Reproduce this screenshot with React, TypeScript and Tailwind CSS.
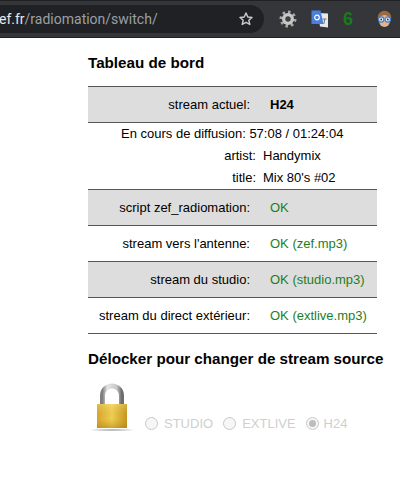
import React from "react";

function Row({ label, value, shaded, green, bold }: { label: string; value: string; shaded?: boolean; green?: boolean; bold?: boolean }) {
  return (
    <div className={`flex h-9 items-center border-b border-[#555] ${shaded ? "bg-[#dddddd]" : "bg-white"}`}>
      <div className="w-[162px] text-right">{label}</div>
      <div className={`ml-5 ${green ? "text-[#1e7e1e]" : ""} ${bold ? "font-bold" : ""}`}>{value}</div>
    </div>
  );
}

function Radio({ checked }: { checked?: boolean }) {
  return (
    <span className="flex h-[13px] w-[13px] items-center justify-center rounded-full border border-[#c8c8c8] bg-[#f6f6f6]">
      {checked && <span className="h-[7px] w-[7px] rounded-full bg-[#bdbdbd]" />}
    </span>
  );
}

export default function App() {
  return (
    <div className="h-[484px] w-[400px] overflow-hidden bg-white font-['Liberation_Sans',sans-serif] text-[13px] text-black">
      <div className="flex h-[38px] items-center border-y border-b-[#202124] border-t-[#202124] bg-[#35363a]">
        <div className="flex h-7 w-[264px] items-center justify-between rounded-r-full bg-[#202124] pr-[10px] font-['Roboto',sans-serif] text-[14px]">
          <span className="-ml-px text-[#e8eaed]">ef.fr<span className="text-[#9aa0a6]">/radiomation/switch/</span></span>
          <svg width="16" height="16" viewBox="0 0 24 24" fill="none" stroke="#c8cacd" strokeWidth="2.2" strokeLinejoin="round">
            <path d="M12 3l2.700 6 6.300.6-4.800 4.200 1.500 6.400L12 16.900 6.300 20.200l1.500-6.400L3 9.600 9.300 9z" />
          </svg>
        </div>
        <div className="ml-[15px] flex items-center">
          <svg width="18" height="18" viewBox="0 0 18 18">
            <circle cx="9" cy="9" r="6.800" fill="none" stroke="#a8a8a8" strokeWidth="3.400" strokeDasharray="2.400 2.900" />
            <circle cx="9" cy="9" r="6" fill="#c6c6c6" />
            <circle cx="9" cy="9" r="3.300" fill="#404040" stroke="#e4e4e4" strokeWidth="0.800" />
          </svg>
          <svg className="ml-[14px]" width="17" height="18" viewBox="0 0 17 18">
            <path d="M7 3 L17 3.500 V17.500 L9 16.500z" fill="#e8e8e8" />
            <path d="M0.500 0.500 H9.500 L12.500 14 H0.500z" fill="#4a7fe0" />
            <circle cx="6" cy="7.500" r="2.300" fill="none" stroke="#fff" strokeWidth="1.200" />
            <path d="M11.500 9 H15.500 M13.800 9 L12.800 14" stroke="#777" strokeWidth="1" fill="none" />
          </svg>
          <span className="ml-[15px] w-[10px] text-[18px] leading-none font-bold text-[#1a7a1a]">6</span>
          <svg className="ml-[23px]" width="17" height="18" viewBox="0 0 17 18">
            <circle cx="8.500" cy="7.500" r="6.800" fill="#9c6a3f" />
            <ellipse cx="8.500" cy="11" rx="5.500" ry="6" fill="#e3b48f" />
            <circle cx="5.200" cy="9.500" r="2.700" fill="#e4f1fb" stroke="#3f7fd0" strokeWidth="1.200" />
            <circle cx="11.800" cy="9.500" r="2.700" fill="#e4f1fb" stroke="#3f7fd0" strokeWidth="1.200" />
            <circle cx="5.200" cy="9.500" r="0.900" fill="#333" />
            <circle cx="11.800" cy="9.500" r="0.900" fill="#333" />
          </svg>
        </div>
      </div>

      <div className="pl-[88px]">
        <h1 className="mt-4 text-[15.2px] leading-[17px] font-bold">Tableau de bord</h1>

        <div className="mt-[15px] w-[289px] border-t border-[#555]">
          <Row label="stream actuel:" value="H24" shaded bold />
          <div className="h-[67px] border-b border-[#555]">
            <div className="ml-[33px] leading-[22px]">En cours de diffusion: 57:08 / 01:24:04</div>
            <div className="flex leading-[22px]">
              <div className="w-[168px] text-right">artist:</div>
              <div className="ml-[7px]">Handymix</div>
            </div>
            <div className="flex leading-[22px]">
              <div className="w-[168px] text-right">title:</div>
              <div className="ml-[7px]">Mix 80's #02</div>
            </div>
          </div>
          <Row label="script zef_radiomation:" value="OK" shaded green />
          <Row label="stream vers l'antenne:" value="OK (zef.mp3)" green />
          <Row label="stream du studio:" value="OK (studio.mp3)" shaded green />
          <Row label="stream du direct extérieur:" value="OK (extlive.mp3)" green />
        </div>

        <h2 className="mt-4 text-[15.2px] leading-[17px] font-bold whitespace-nowrap">Délocker pour changer de stream source</h2>

        <div className="mt-[16px] flex items-end text-[#cfcfcf]">
          <svg width="48" height="50" viewBox="0 0 48 50">
            <defs>
              <linearGradient id="gold" x1="0" y1="0" x2="1" y2="0">
                <stop offset="0" stopColor="#d5a52a" />
                <stop offset="0.500" stopColor="#f0cf52" />
                <stop offset="1" stopColor="#c4941f" />
              </linearGradient>
              <linearGradient id="goldFade" x1="0" y1="0" x2="0" y2="1">
                <stop offset="0" stopColor="#fff2a8" stopOpacity="0.300" />
                <stop offset="0.600" stopColor="#c4941f" stopOpacity="0" />
                <stop offset="1" stopColor="#a87a10" stopOpacity="0.500" />
              </linearGradient>
              <linearGradient id="steel" x1="0" y1="0" x2="1" y2="0">
                <stop offset="0" stopColor="#808080" />
                <stop offset="0.250" stopColor="#e4e4e4" />
                <stop offset="0.750" stopColor="#c8c8c8" />
                <stop offset="1" stopColor="#6e6e6e" />
              </linearGradient>
              <radialGradient id="shadow">
                <stop offset="0" stopColor="#a0a0a0" />
                <stop offset="1" stopColor="#ffffff" />
              </radialGradient>
            </defs>
            <path d="M14.500 21 V12.500 a9.500 9.500 0 0 1 19 0 V21" fill="none" stroke="url(#steel)" strokeWidth="5" />
            <rect x="9" y="21" width="30" height="24" fill="url(#gold)" />
            <rect x="9" y="21" width="30" height="24" fill="url(#goldFade)" />
            <ellipse cx="24" cy="47" rx="24" ry="1.500" fill="url(#shadow)" />
          </svg>
          <div className="ml-[9px] flex items-center">
            <Radio />
            <span className="ml-[6px]">STUDIO</span>
            <span className="ml-[10px]"><Radio /></span>
            <span className="ml-[6px]">EXTLIVE</span>
            <span className="ml-[10px]"><Radio checked /></span>
            <span className="ml-[5px]">H24</span>
          </div>
        </div>
      </div>
    </div>
  );
}
